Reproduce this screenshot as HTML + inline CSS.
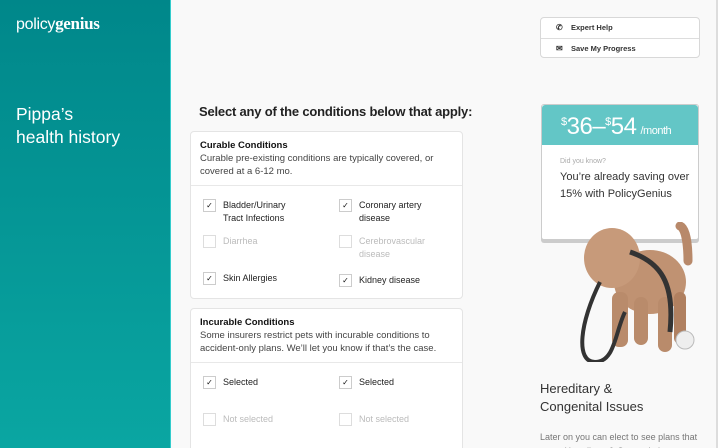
<!DOCTYPE html>
<html><head><style>
*{margin:0;padding:0;box-sizing:border-box}
html,body{width:718px;height:448px;overflow:hidden}
body{background:#f9f9f9;font-family:"Liberation Sans",sans-serif;position:relative;color:#222}
.side{position:absolute;left:0;top:0;width:171px;height:448px;background:linear-gradient(#00878a,#0aa6a2);border-right:1px solid #3cc;}
.logo{position:absolute;left:16px;top:14px;color:#fff;font-size:16px;letter-spacing:-0.3px}
.logo b{font-family:"Liberation Serif",serif;font-weight:bold;font-size:17px}
.title{position:absolute;left:16px;top:103px;color:#fff;font-size:17.5px;line-height:23px}
.rbar{position:absolute;left:716px;top:0;width:2px;height:448px;background:#ddd}
h2{position:absolute;left:199px;top:104px;font-size:13px;font-weight:bold;letter-spacing:-0.2px}
.card{position:absolute;left:190px;width:273px;background:#fff;border:1px solid #e4e4e4;border-radius:4px}
.hd{padding:7px 9px 7px 9px;border-bottom:1px solid #e8e8e8;font-size:9.5px;line-height:13px;color:#444}
.hd b{color:#111;font-size:9.5px}
.it{position:absolute;font-size:9px;line-height:13px;color:#222;padding-left:20px}
.it.off{color:#bbb}
.it i{position:absolute;left:0;top:0;width:13px;height:13px;border:1px solid #ccc;background:#fff;font-style:normal;font-size:8px;text-align:center;line-height:11px;color:#111}
.it.off i{border-color:#ddd}
.btns{position:absolute;left:540px;top:17px;width:160px;height:41px;border:1px solid #d8d8d8;border-radius:4px;background:#fff;font-size:7.5px;color:#333;font-weight:bold}
.btns div{height:20px;line-height:20px;padding-left:30px;position:relative}
.btns div+div{border-top:1px solid #ddd}
.price{position:absolute;left:541px;top:104px;width:158px;height:136px;background:#fff;border:1px solid #ccc;border-radius:3px;box-shadow:0 3px 0 #ccc}
.ph{height:40px;background:#63c6c6;color:#fff;border-radius:3px 3px 0 0;padding:8px 0 0 19px;font-size:24px;letter-spacing:-0.5px}
.ph sup{font-size:11px;vertical-align:9px}
.ph small{font-size:11px;margin-left:4px}
</style></head><body>
<div class="side"><div class="logo">policy<b>genius</b></div><div class="title">Pippa’s<br>health history</div></div>
<div class="rbar"></div>
<h2>Select any of the conditions below that apply:</h2>
<div class="card" style="top:131px;height:168px">
<div class="hd"><b>Curable Conditions</b><br>Curable pre-existing conditions are typically covered, or covered at a 6-12 mo.</div>
<div class="it" style="left:12px;top:67px"><i>✓</i>Bladder/Urinary<br>Tract Infections</div>
<div class="it" style="left:148px;top:67px"><i>✓</i>Coronary artery<br>disease</div>
<div class="it off" style="left:12px;top:103px"><i></i>Diarrhea</div>
<div class="it off" style="left:148px;top:103px"><i></i>Cerebrovascular<br>disease</div>
<div class="it" style="left:12px;top:140px"><i>✓</i>Skin Allergies</div>
<div class="it" style="left:148px;top:142px"><i>✓</i>Kidney disease</div>
</div>
<div class="card" style="top:308px;height:150px">
<div class="hd"><b>Incurable Conditions</b><br>Some insurers restrict pets with incurable conditions to accident-only plans. We’ll let you know if that’s the case.</div>
<div class="it" style="left:12px;top:67px"><i>✓</i>Selected</div>
<div class="it" style="left:148px;top:67px"><i>✓</i>Selected</div>
<div class="it off" style="left:12px;top:104px"><i></i>Not selected</div>
<div class="it off" style="left:148px;top:104px"><i></i>Not selected</div>
</div>
<div class="btns"><div><span style="position:absolute;left:15px;font-size:8px">✆</span>Expert Help</div><div><span style="position:absolute;left:15px;font-size:8px">✉</span>Save My Progress</div></div>
<div class="price"><div class="ph"><sup>$</sup>36–<sup>$</sup>54<small>/month</small></div>
<div style="padding:13px 0 0 18px;font-size:7px;color:#aaa">Did you know?</div>
<div style="padding:4px 0 0 18px;font-size:11px;line-height:17px;color:#333">You’re already saving over 15% with PolicyGenius</div></div>
<svg style="position:absolute;left:570px;top:222px" width="130" height="140">
<path d="M110 4c6 2 8 20 8 35" stroke="#b8896a" stroke-width="9" fill="none" stroke-linecap="round"/>
<ellipse cx="80" cy="60" rx="36" ry="32" fill="#c09272"/>
<ellipse cx="42" cy="36" rx="28" ry="30" fill="#c79a7a"/>
<rect x="42" y="70" width="16" height="55" rx="7" fill="#b98b6b"/>
<rect x="64" y="75" width="14" height="48" rx="7" fill="#b98b6b"/>
<rect x="88" y="75" width="14" height="55" rx="7" fill="#b98b6b"/>
<rect x="104" y="70" width="12" height="52" rx="6" fill="#b08060"/>
<path d="M30 60c-20 40-25 80-5 80s20-30 30-50" stroke="#333" stroke-width="4" fill="none"/>
<path d="M60 30c30 10 45 30 40 80" stroke="#333" stroke-width="5" fill="none"/>
<circle cx="115" cy="118" r="9" fill="#eee" stroke="#bbb"/>
</svg>
<div style="position:absolute;left:540px;top:380px;font-size:13px;line-height:18px;color:#333">Hereditary &amp;<br>Congenital Issues</div>
<div style="position:absolute;left:540px;top:430px;font-size:9px;line-height:14px;color:#777;width:170px">Later on you can elect to see plans that cover Hereditary &amp; Congenital</div>
</body></html>
